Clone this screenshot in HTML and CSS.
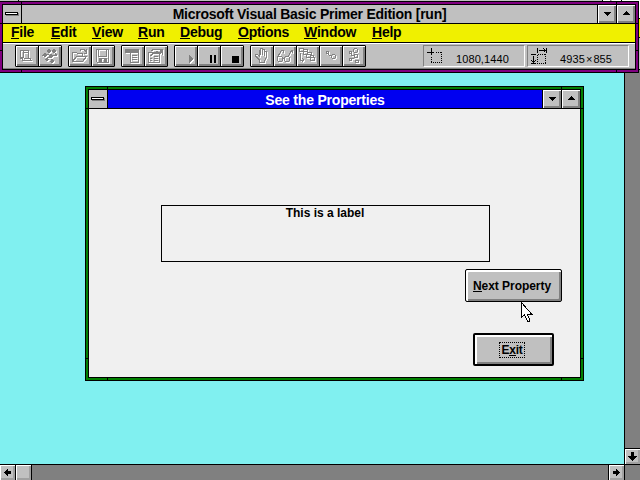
FILE: index.html
```html
<!DOCTYPE html>
<html lang="en">
<head>
<meta charset="utf-8">
<title>Microsoft Visual Basic Primer Edition [run]</title>
<link rel="stylesheet" href="styles.css">
</head>
<body>
<div class="desktop">
  <main class="client"></main>
  <div class="vscroll"><span class="cap"><svg width="15" height="15"><path d="M6 3h3v4h3v1h-1v1h-1v1h-1v1h-1v1h-1v-1h-1v-1h-1v-1h-1v-1h-1v-1h3z"/></svg></span></div>
  <div class="hscroll">
    <span class="cap"><svg width="15" height="15"><path d="M4 7h1v-1h1v-1h1v-1h1v2h3v3h-3v2h-1v-1h-1v-1h-1v-1h-1z"/></svg></span>
    <span class="cap thumb"></span>
    <span class="cap end"><svg width="15" height="15"><path d="M11 7h-1v-1h-1v-1h-1v-1h-1v2h-3v3h3v2h1v-1h1v-1h1v-1h1z"/></svg></span>
  </div>

  <!-- edges of the window lying behind the main one -->
  <div class="behind-top"></div>
  <div class="behind-right"></div>

  <section class="window child">
    <i class="nv l"></i><i class="nv r"></i><i class="nh t"></i><i class="nh b"></i>
    <div class="inner">
      <header class="title active"><span class="sys"><b></b></span><span class="caption">See the Properties</span>
        <span class="box"><svg width="18" height="18"><path d="M6 7h7v1h-1v1h-1v1h-1v1h-1v-1h-1v-1h-1v-1h-1z"/></svg></span><span class="box"><svg width="18" height="18"><path d="M9 6h1v1h1v1h1v1h1v1h-7v-1h1v-1h1v-1h1z"/></svg></span></header>
      <div class="form">
        <div class="label">This is a label</div>
        <button class="btn next"><span><u>N</u>ext Property</span></button>
        <button class="btn exit"><span>E<u>x</u>it</span></button>
      </div>
    </div>
  </section>

  <section class="window main">
    <i class="nv l"></i><i class="nv r"></i><i class="nh t"></i><i class="nh b"></i>
    <div class="inner">
      <header class="title"><span class="sys"><b></b></span><span class="caption">Microsoft Visual Basic Primer Edition [run]</span>
        <span class="box"><svg width="18" height="18"><path d="M6 7h7v1h-1v1h-1v1h-1v1h-1v-1h-1v-1h-1v-1h-1z"/></svg></span><span class="box"><svg width="18" height="18"><path d="M9 6h1v1h1v1h1v1h1v1h-7v-1h1v-1h1v-1h1z"/></svg></span></header>
      <nav class="menu"><span><u>F</u>ile</span><span><u>E</u>dit</span><span><u>V</u>iew</span><span><u>R</u>un</span><span><u>D</u>ebug</span><span><u>O</u>ptions</span><span><u>W</u>indow</span><span><u>H</u>elp</span></nav>
      <div class="toolbar">
        <div class="group">
          <span class="tool"><svg><g class="hi"><use href="#i-form"/></g><g id="i-form"><path d="M4.500 3.500v9h2v2h9M4 4.500h3M7.500 4v8M7 4.500h6M12.500 5v7M8 6.500h4M5 11.500h2M8 12.500h6M14.500 12v3"/></g></svg></span>
          <span class="tool"><svg><g class="hi"><use href="#i-mod"/></g><g id="i-mod"><path class="fill" d="M9 3h2v1h1v2h-1v1h-2v-1h-1v-2h1zM14 3h2v1h1v2h-1v1h-2v-1h-1v-2h1zM5 7h2v1h1v2h-1v1h-2v-1h-2v-1h1v-1h1zM11 8h2v1h1v2h-1v1h-2v-1h-1v-2h1zM16 7h1v1h1v2h-2zM7 12h2v1h1v1h-1v1h-2v-1h-1v-1h1zM12 13h2v1h1v2h-1v1h-2v-1h-1v-1h1z"/><path d="M7 8.500h3M13 9.500h3M8 11.500h3"/></g></svg></span>
        </div>
        <div class="group">
          <span class="tool"><svg><g class="hi"><use href="#i-open"/></g><g id="i-open"><path d="M3.500 15.500v-9h4l1 1h5v3M3.500 15.500l4-5h10l-4 5zM11 4.500l1-1h3l2 2M17.500 3v4h-3"/></g></svg></span>
          <span class="tool"><svg><g class="hi"><use href="#i-save"/></g><g id="i-save"><path d="M4.500 3.500h12v13h-11l-1-1zM6.500 4v6h8v-6"/><path class="fill" d="M7 12h8v4h-3v-3h-2v3h-3z"/></g></svg></span>
        </div>
        <div class="group">
          <span class="tool"><svg><g class="hi"><use href="#i-menu"/></g><g id="i-menu"><path class="fill" d="M3 3h14v4h-14z"/><path d="M8.500 7v9h8v-9M10 9.500h5M10 11.500h5M10 13.500h5"/></g></svg></span>
          <span class="tool"><svg><g class="hi"><use href="#i-prop"/></g><g id="i-prop"><path d="M3.500 6.500h11v10h-11zM5 9.500h2M9 10.500h4M5 12.500h2M9 12.500h4M5 14.500h2M9 14.500h4M6 5l3-2h6v4h-6l-3 2M11 5h2"/><path class="fill" d="M15 3h3v6h-1v-2h-2z"/></g></svg></span>
        </div>
        <div class="group">
          <span class="tool"><svg><g class="hi"><use href="#i-run"/></g><g id="i-run"><path class="fill" d="M14 9h1v1h1v1h1v1h1v2h-1v1h-1v1h-1v1h-1z"/></g></svg></span>
          <span class="tool"><svg><path class="ink" d="M12 9h2v8h-2zM16 9h2v8h-2z"/></svg></span>
          <span class="tool"><svg><path class="ink" d="M11 10h7v7h-7z"/></svg></span>
        </div>
        <div class="group debug">
          <span class="tool"><svg><g class="hi"><use href="#i-hand"/></g><g id="i-hand"><path d="M8.500 16v-2l-4-4v-1.500h2l1.500 1.500v-6h1.500v5v-6.500h2v6.500v-5.500h2v6v-4h2v6l-2 3v1.500z"/></g></svg></span>
          <span class="tool"><svg><g class="hi"><use href="#i-spec"/></g><g id="i-spec"><path d="M3.500 11.500l1-1h3l1 1v3l-1 1h-3l-1-1zM10.500 11.500l1-1h3l1 1v3l-1 1h-3l-1-1zM8 12.500h3M3.500 11l4-6.500h2M14.500 10l3-5.500M17 4.500h1v2M9 5v2"/></g></svg></span>
          <span class="tool"><svg><g class="hi"><use href="#i-calls"/></g><g id="i-calls"><path d="M2.500 2.500h4v3h-4zM6.500 5.500h4v3h-4zM9.500 8.500h4v3h-4zM13.500 11.500h4v3h-4zM7 3.500h3v2M11 6.500h3v2M14 9.500h2v2M3.500 7v7h3M5 12l2 2l-2 2"/></g></svg></span>
          <span class="tool"><svg><g class="hi"><use href="#i-step"/></g><g id="i-step"><path d="M6.500 5.500h2v2h-2zM8.500 8v1M9 9.500h2M11.500 9.500l1-1h2l1 1v2l-1 1h-2l-1-1z"/></g></svg></span>
          <span class="tool"><svg><g class="hi"><use href="#i-proc"/></g><g id="i-proc"><path d="M6.500 5.500h2v2h-2zM10.500 3.500l1-1h2l1 1v2l-1 1h-2l-1-1zM6.500 12.500h2v2h-2zM11.500 8.500h3v3h-3zM12.500 14.500h3v2h-3zM8.500 8v1h2M9 12.500h2"/></g></svg></span>
        </div>
        <div class="panel first"><svg width="18" height="18"><path d="M4.500 0v7M0 4.500h7"/><path stroke-dasharray="1 1" d="M9 4.500h6M14.500 4v11M15 14.500h-11M4.500 9v6"/></svg><span>1080,1440</span></div>
        <div class="panel second"><svg width="18" height="18"><path d="M6.500 0v5M15.500 0v5M8 2.500h7M12.500 .5l2 2l-2 2M0 6.500h5M2.500 8v7M.5 12.500l2 2l2-2M0 15.500h5"/><path stroke-dasharray="1 1" d="M7 6.500h8M14.500 6v9M15 15.500h-9M6.500 7v9"/></svg><span>4935<em>×</em>855</span></div>
      </div>
    </div>
  </section>
  <svg class="cursor" width="12" height="20"><path d="M.5.5v15l3-3 3 6.500h2v-2l-2.500-5h4.500z"/></svg>
</div>
</body>
</html>
```
FILE: styles.css
```css
* { box-sizing: border-box; }
body { margin: 0; font-family: "Liberation Sans", Arial, sans-serif; color: #000; }
u { display: inline-block; height: 12px; text-decoration: none; box-shadow: 0 1px #000; }
svg { display: block; shape-rendering: crispEdges; }
.desktop {
  position: relative; width: 640px; height: 480px; overflow: hidden;
  display: grid; grid-template: 464px 16px / 624px 16px; background: #808080;
}
.client { background: #80f0f0; }
.vscroll { border-left: 1px solid #000; display: flex; flex-direction: column; justify-content: flex-end; }
.vscroll .cap { border-top: 1px solid #000; height: 16px; }
.hscroll { grid-column: 1 / 3; border-top: 1px solid #000; display: flex; }
.hscroll .cap { width: 16px; border-right: 1px solid #000; }
.hscroll .end { width: 17px; margin-left: auto; margin-right: 15px; border-left: 1px solid #000; }
.cap { background: #c0c0c0; overflow: hidden; }
.cap svg, .cap.thumb { box-shadow: inset 1px 1px #fff, inset -2px -2px #a0a0a0; }

.behind-top { position: absolute; left: 0; top: 0; width: 640px; height: 1px; background: linear-gradient(to right, #c0c0c0 18px, #000 18px 19px, #c0c0c0 19px 602px, #000 602px 603px, #fff 603px 610px, #808080 610px 611px, #fff 612px 621px, #000 621px 622px, #fff 622px); }
.behind-right { position: absolute; right: 0; top: 0; width: 1px; height: 73px; background: linear-gradient(#fff 18px, #000 18px 19px, #f0f000 19px 37px, #000 37px 38px, #c0c0c0 38px 69px, #000 69px 70px, #808080 70px); }

.window { position: absolute; border: 1px solid #000; padding: 2px; }
.inner { position: relative; border: 1px solid #000; height: 100%; display: flex; flex-direction: column; }
.main { left: -1px; top: 1px; width: 640px; height: 72px; background: #800080; }
.child { left: 85px; top: 86px; width: 499px; height: 295px; background: #008000; }
.nv, .nh { position: absolute; background: #000; }
.nv { width: 1px; top: 0; bottom: 0; }
.nh { height: 1px; left: 0; right: 0; }
.nv.l { left: 21px; }
.nv.r { right: 21px; }
.nh.t { top: 21px; }
.nh.b { bottom: 21px; }
.title { display: flex; height: 19px; background: #c0c0c0; border-bottom: 1px solid #000; font: bold 14px/18px "Liberation Sans", Arial, sans-serif; letter-spacing: -.25px; flex: none; }
.caption { flex: 1; text-align: center; height: 18px; }
.active { background: #0000f0; color: #fff; letter-spacing: -.2px; }
.active .caption { padding-top: 1px; }
.sys { width: 19px; border-right: 1px solid #000; background: #c0c0c0; padding: 7px 0 0 2px; }
.sys b { display: block; width: 13px; height: 3px; background: #fff; border: 1px solid #000; box-shadow: 1px 1px #808080; }
.box { width: 19px; border-left: 1px solid #000; background: #c0c0c0; }
.box svg { box-shadow: inset 1px 1px #fff, inset -2px -2px #808080; }

.menu { height: 19px; flex: none; display: grid; grid-template-columns: 40px 41px 46px 42px 58px 66px 68px auto; padding-left: 8px; background: #f0f000; border-bottom: 1px solid #000; font: bold 14px/17px "Liberation Sans", Arial, sans-serif; letter-spacing: -.25px; }
.menu u { height: 14px; }
.toolbar { flex: 1; display: flex; align-items: flex-start; background: #c0c0c0; border-top: 1px solid #fff; border-bottom: 1px solid #808080; padding: 1px 0 0 12px; }
.group { display: flex; border: 1px solid #000; border-radius: 1px; height: 22px; margin-right: 6px; }
.tool { width: 22px; height: 20px; box-shadow: inset 1px 1px #fff, inset -2px -2px #808080; }
.tool + .tool { width: 23px; border-left: 1px solid #000; }
.tool svg { width: 22px; height: 20px; fill: none; stroke: #808080; }
.tool .fill { fill: #808080; stroke: none; }
.tool .ink { fill: #000; stroke: none; }
.hi { filter: brightness(9); transform: translate(1px, 1px); }
.panel { width: 102px; height: 22px; border: 1px solid #808080; border-right-color: #fff; border-bottom-color: #fff; display: flex; font-size: 11px; }
.first { margin-left: 51px; }
.second { margin-left: 2px; }
.panel svg { margin: 2px 0 0 3px; fill: none; stroke: #000; flex: none; }
.panel span { margin: 7px 0 0 11px; line-height: 12px; letter-spacing: .1px; white-space: nowrap; }
.panel em { font-style: normal; margin: 0 1px; }

.form { flex: 1; background: #f0f0f0; display: flex; flex-direction: column; padding: 96px 18px 0 72px; }
.label { width: 329px; height: 57px; border: 1px solid #000; padding-right: 1px; text-align: center; font: bold 12px/14px "Liberation Sans", Arial, sans-serif; }
.btn { align-self: flex-end; height: 33px; padding: 0; border: 1px solid #000; border-radius: 2px; background: #c0c0c0; color: #000; font: bold 12px/14px "Liberation Sans", Arial, sans-serif; box-shadow: inset 2px 2px #fff, inset -2px -2px #808080; }
.next { width: 97px; margin-top: 7px; padding-right: 3px; letter-spacing: -.05px; }
.exit { width: 81px; margin: 31px 8px 0 0; border-width: 2px; padding-right: 3px; letter-spacing: -.3px; }
.exit span { display: inline-block; outline: 1px dotted #000; padding: 0 2px; }
.cursor { position: absolute; left: 521px; top: 302px; fill: #fff; stroke: #000; }
```
